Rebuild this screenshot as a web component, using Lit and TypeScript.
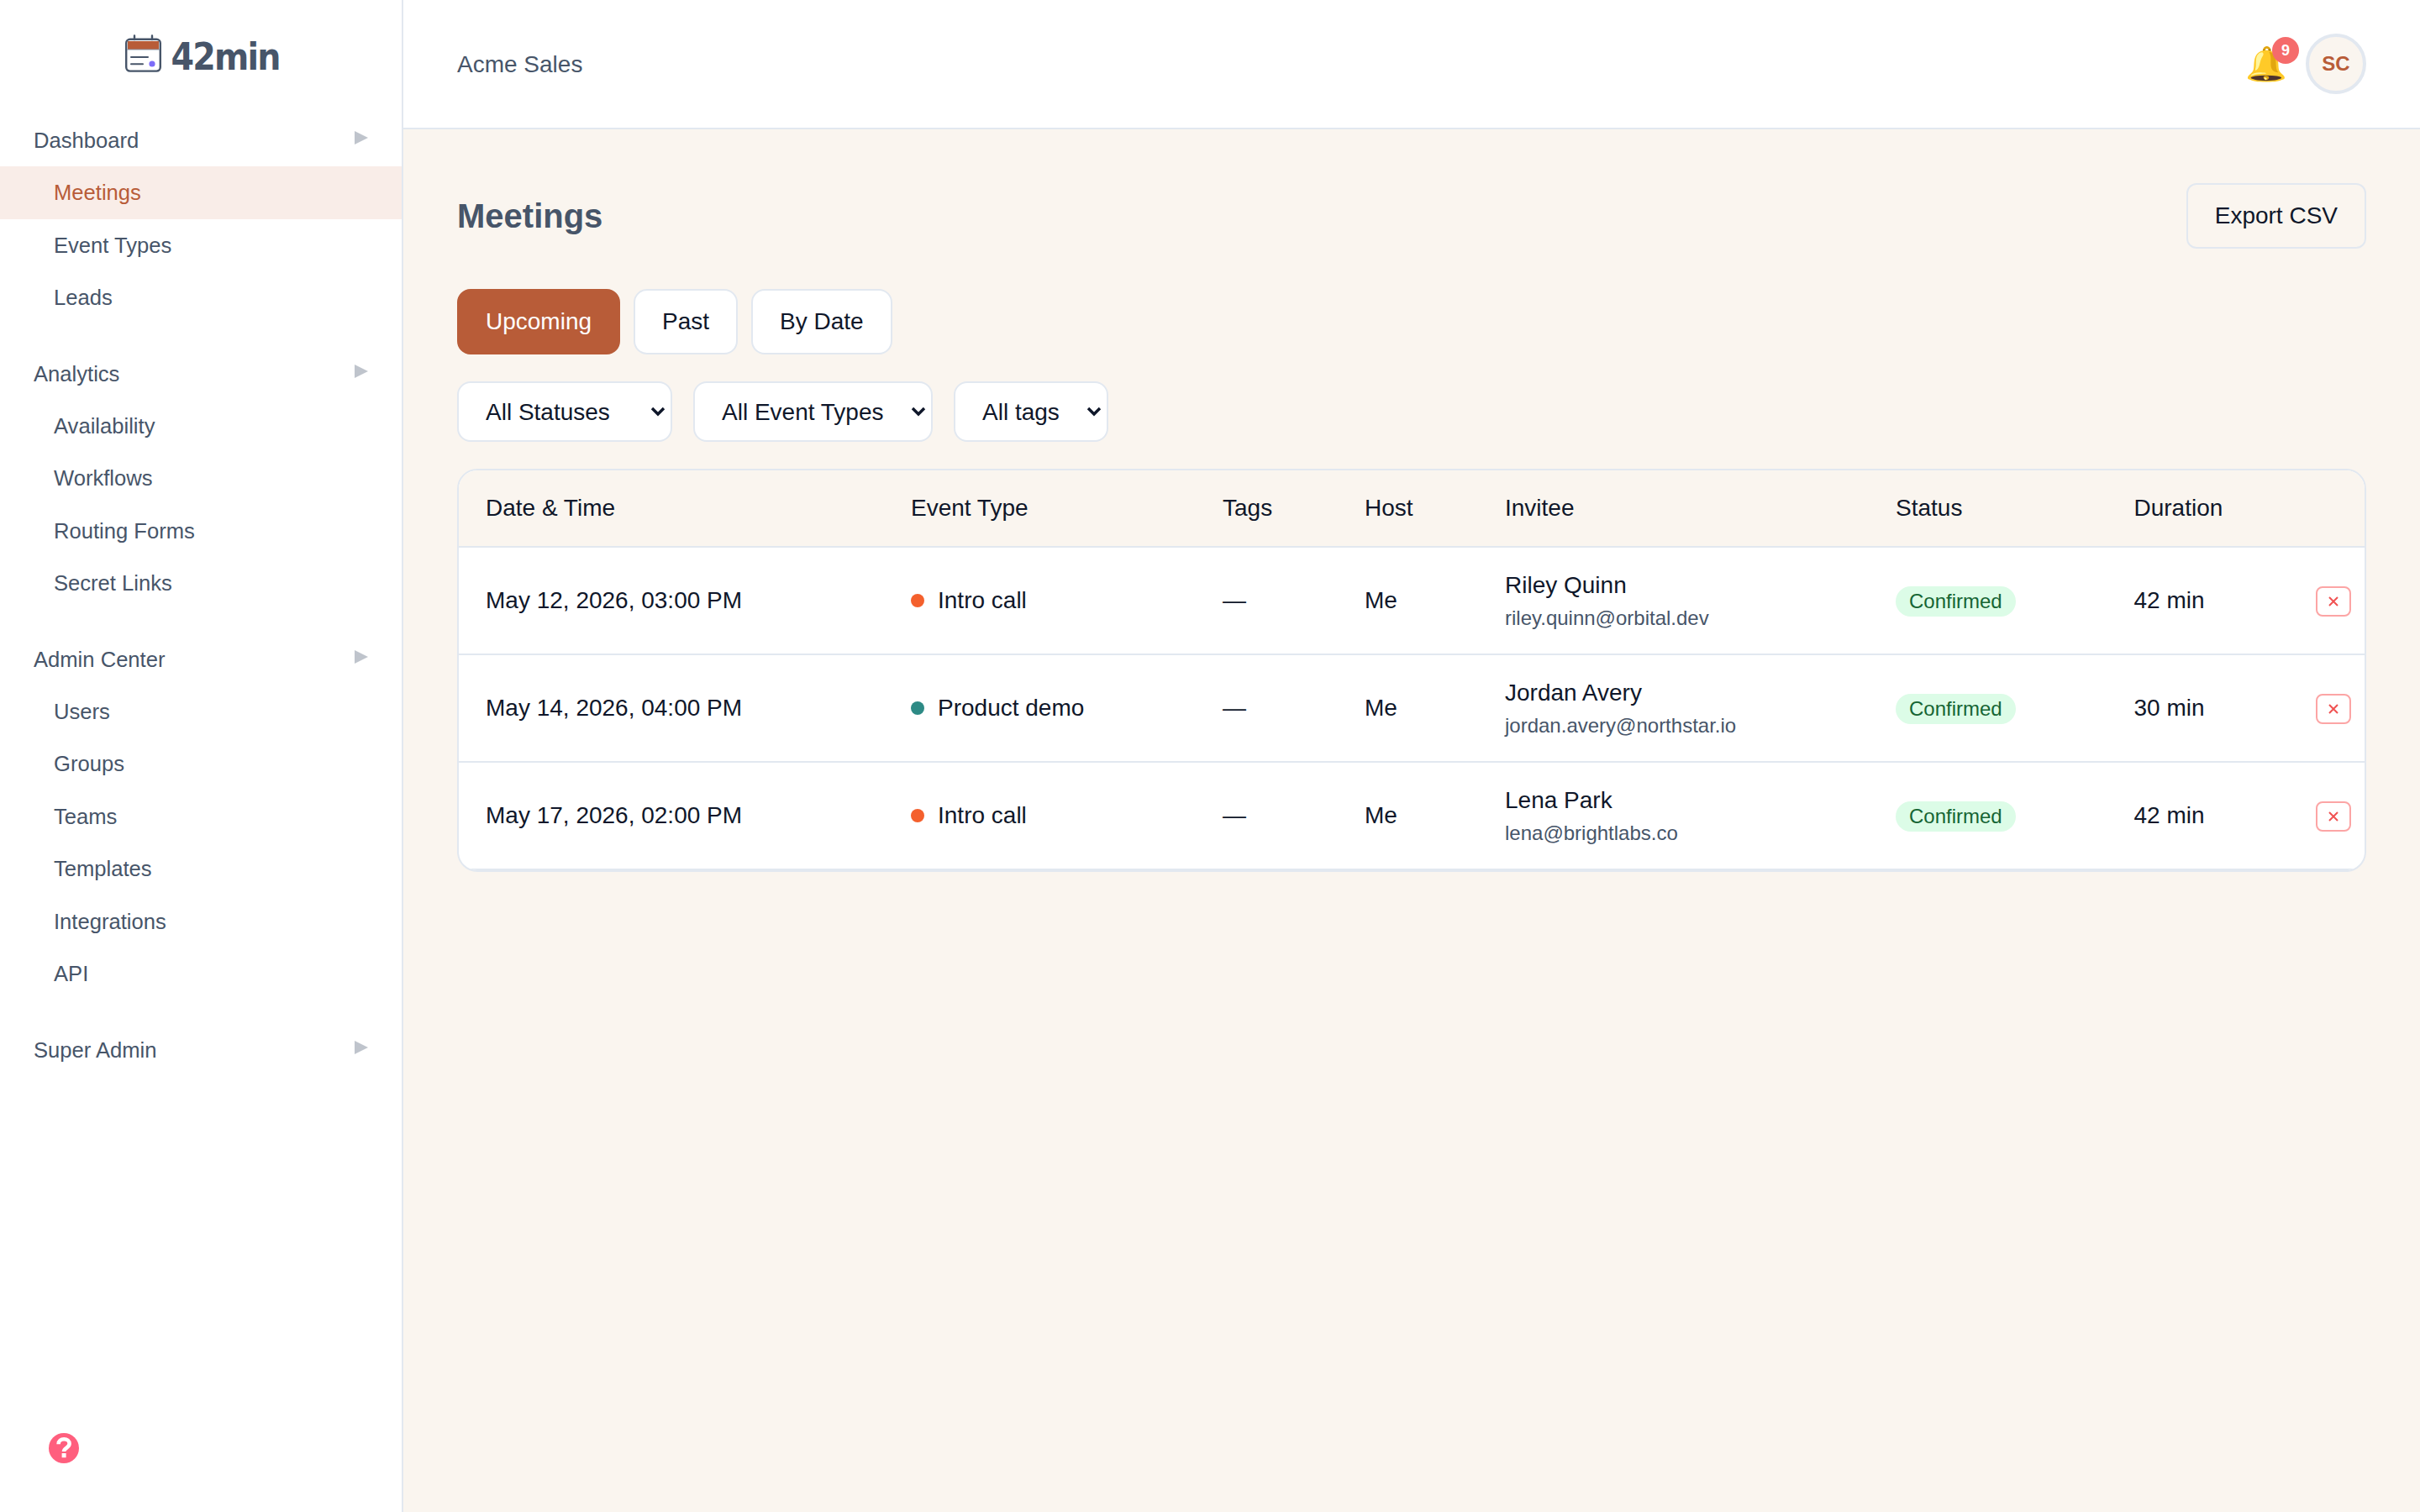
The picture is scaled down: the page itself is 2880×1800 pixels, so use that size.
import { LitElement, html, css } from "lit";
import { customElement } from "lit/decorators.js";

interface NavGroup {
  label: string;
  items: string[];
}

interface Meeting {
  when: string;
  type: string;
  dot: string;
  name: string;
  email: string;
  duration: string;
}

const NAV: NavGroup[] = [
  { label: "Dashboard", items: ["Meetings", "Event Types", "Leads"] },
  { label: "Analytics", items: ["Availability", "Workflows", "Routing Forms", "Secret Links"] },
  { label: "Admin Center", items: ["Users", "Groups", "Teams", "Templates", "Integrations", "API"] },
  { label: "Super Admin", items: [] },
];

const MEETINGS: Meeting[] = [
  { when: "May 12, 2026, 03:00 PM", type: "Intro call", dot: "#f4602d", name: "Riley Quinn", email: "riley.quinn@orbital.dev", duration: "42 min" },
  { when: "May 14, 2026, 04:00 PM", type: "Product demo", dot: "#2d8a85", name: "Jordan Avery", email: "jordan.avery@northstar.io", duration: "30 min" },
  { when: "May 17, 2026, 02:00 PM", type: "Intro call", dot: "#f4602d", name: "Lena Park", email: "lena@brightlabs.co", duration: "42 min" },
];

const COLUMNS = ["Date & Time", "Event Type", "Tags", "Host", "Invitee", "Status", "Duration", ""];

// first option is the one shown; the select sizes itself to the longest
const FILTERS = [
  ["All Statuses", "Confirmed", "Rescheduled", "Cancelled"],
  ["All Event Types", "Intro call", "Product demo"],
  ["All tags"],
];

@customElement("app-root")
export class AppRoot extends LitElement {
  // the reference is a 1440x900 layout shot at 2x, so zoom keeps the css values readable
  static styles = css`
    :host {
      display: block;
      zoom: 2;
      width: 1440px;
      height: 900px;
      font-family: "Liberation Sans", Arial, sans-serif;
      color: #0f172a;
    }
    .app {
      display: flex;
      height: 900px;
      background: #faf5ef;
    }
    .sidebar {
      width: 240px;
      flex: none;
      box-sizing: border-box;
      display: flex;
      flex-direction: column;
      background: #fff;
      border-right: 1px solid #e2e8f0;
      padding-bottom: 28px;
    }
    .logo {
      display: flex;
      align-items: center;
      justify-content: center;
      gap: 5px;
      padding: 20px 0 24px;
      height: 24px;
    }
    .logo svg {
      display: block;
    }
    .logo-text {
      font-family: "DejaVu Sans", sans-serif;
      font-stretch: condensed;
      font-size: 22px;
      font-weight: 700;
      letter-spacing: -0.9px;
      color: #475569;
      position: relative;
      top: 1.5px;
    }
    .group {
      margin-bottom: 14px;
    }
    .group-head,
    .item {
      font-size: 12.8px;
      line-height: 19.2px;
      padding: 6px 20px;
      color: #475569;
    }
    .group-head {
      display: flex;
      align-items: center;
      justify-content: space-between;
    }
    .group-head svg {
      display: block;
      margin-top: -3px;
    }
    .item {
      padding-left: 32px;
      padding-right: 12px;
    }
    .item.active {
      background: #f9ede8;
      color: #b85c38;
    }
    .help {
      margin-top: auto;
      margin-left: 28px;
      width: 20px;
      height: 20px;
    }
    .main {
      flex: 1;
      min-width: 0;
      display: flex;
      flex-direction: column;
    }
    .topbar {
      height: 76px;
      flex: none;
      display: flex;
      align-items: center;
      justify-content: space-between;
      padding: 0 32px;
      background: #fff;
      border-bottom: 1px solid #e2e8f0;
    }
    .org {
      font-size: 14px;
      line-height: 21px;
      padding-top: 1px;
      color: #475569;
    }
    .top-actions {
      display: flex;
      align-items: center;
      gap: 4px;
    }
    .bell {
      position: relative;
      font-size: 20px;
      line-height: 24px;
      width: 32px;
      text-align: left;
    }
    .bell-badge {
      position: absolute;
      top: -4px;
      right: 0;
      width: 16px;
      height: 16px;
      border-radius: 50%;
      background: #f56b6b;
      color: #fff;
      font-size: 9px;
      font-weight: 700;
      line-height: 16px;
      text-align: center;
    }
    .avatar {
      width: 36px;
      height: 36px;
      box-sizing: border-box;
      border-radius: 50%;
      border: 2px solid #e2e8f0;
      background: #faf5ef;
      color: #b85c38;
      font-size: 12px;
      font-weight: 700;
      display: flex;
      align-items: center;
      justify-content: center;
    }
    .content {
      padding: 32px;
    }
    .page-head {
      display: flex;
      align-items: center;
      justify-content: space-between;
      margin-bottom: 24px;
    }
    h1 {
      margin: 0;
      font-size: 20px;
      font-weight: 700;
      color: #475569;
    }
    .btn {
      font: inherit;
      font-size: 14px;
      line-height: 21px;
      padding: 8px 16px;
      border: 1px solid #e2e8f0;
      border-radius: 8px;
      background: #fff;
      color: #0f172a;
    }
    .btn.export {
      background: #faf5ef;
      border-radius: 6px;
    }
    .btn.on {
      background: #b85c38;
      border-color: #b85c38;
      color: #fff;
    }
    .tabs {
      display: flex;
      gap: 8px;
      margin-bottom: 16px;
    }
    .filters {
      display: flex;
      gap: 12.5px;
      margin-bottom: 16px;
    }
    .select-wrap {
      position: relative;
    }
    .select-wrap svg {
      position: absolute;
      right: 4px;
      top: 15px;
      pointer-events: none;
    }
    select {
      display: block;
      appearance: none;
      font: inherit;
      font-size: 14px;
      padding: 0 28px 0 16px;
      height: 36px;
      border: 1px solid #e2e8f0;
      border-radius: 8px;
      background: #fff;
      color: #0f172a;
    }
    .card {
      border: 1px solid #e2e8f0;
      border-radius: 12px;
      overflow: hidden;
      background: #fff;
    }
    table {
      width: 100%;
      table-layout: fixed;
      border-collapse: separate;
      border-spacing: 0;
      font-size: 14px;
    }
    th,
    td {
      box-sizing: border-box;
      text-align: left;
      padding: 0 0 0 16px;
      font-weight: 400;
    }
    th {
      height: 46px;
      background: #faf5ef;
      border-bottom: 1px solid #e2e8f0;
    }
    td {
      height: 64px;
      border-bottom: 1px solid #e2e8f0;
    }
    th:nth-child(1) { width: 253px; }
    th:nth-child(2) { width: 185.5px; }
    th:nth-child(3) { width: 84.5px; }
    th:nth-child(4) { width: 83.5px; }
    th:nth-child(5) { width: 232.5px; }
    th:nth-child(6) { width: 141.75px; }
    th:nth-child(7) { width: 118px; }
    .type {
      display: flex;
      align-items: center;
      gap: 8px;
    }
    .dot {
      width: 8px;
      height: 8px;
      border-radius: 50%;
    }
    .invitee-name {
      line-height: 21px;
    }
    .invitee-email {
      font-size: 12px;
      line-height: 18px;
      color: #475569;
    }
    .badge {
      display: inline-block;
      margin-top: 1px;
      padding: 2px 8px;
      border-radius: 9px;
      background: #dcfce7;
      color: #166534;
      font-size: 12px;
      vertical-align: middle;
    }
    td.act {
      padding: 0 8px 0 0;
      text-align: right;
    }
    .remove {
      display: inline-flex;
      align-items: center;
      justify-content: center;
      box-sizing: border-box;
      width: 21px;
      height: 18px;
      margin-top: 1px;
      padding: 0;
      border: 1px solid #fca5a5;
      border-radius: 4px;
      background: #fff;
      vertical-align: middle;
    }
  `;

  private renderGroup(group: NavGroup) {
    return html`
      <div class="group">
        <div class="group-head">
          <span>${group.label}</span>
          <svg width="8" height="8" viewBox="0 0 8 8"><polygon points="0,0 8,4 0,8" fill="#bfc4cc" /></svg>
        </div>
        ${group.items.map(
          (item) => html`<div class="item ${item === "Meetings" ? "active" : ""}">${item}</div>`
        )}
      </div>
    `;
  }

  private renderSidebar() {
    return html`
      <aside class="sidebar">
        <div class="logo">
          <svg width="24" height="24" viewBox="0 0 48 48">
            <path d="M15 2.5V7M36 2.5V7" stroke="#475569" stroke-width="2.4" stroke-linecap="round" />
            <path d="M7 9h37v10H7z" fill="#b85c38" />
            <rect x="5.2" y="6.8" width="40.6" height="37.8" rx="4.5" fill="none" stroke="#475569" stroke-width="2.4" />
            <path d="M6 19h39" stroke="#8a96a6" stroke-width="1" />
            <path d="M11 28h20M11 36.3h14" stroke="#475569" stroke-width="2" stroke-linecap="round" />
            <circle cx="36" cy="36" r="3.6" fill="#7c6cf8" />
          </svg>
          <span class="logo-text">42min</span>
        </div>
        ${NAV.map((g) => this.renderGroup(g))}
        <svg class="help" viewBox="0 0 20 20">
          <circle cx="10" cy="10" r="9" fill="#ff5f7e" />
          <path d="M6.8 7.6c0-2 1.5-3 3.3-3s3.2 1.1 3.2 2.8c0 2.3-3.3 2.4-3.3 4.6" fill="none" stroke="#fff" stroke-width="2.3" />
          <rect x="8.8" y="13" width="2.5" height="2.6" fill="#fff" />
        </svg>
      </aside>
    `;
  }

  private renderFilter(options: string[]) {
    return html`
      <div class="select-wrap">
        <select>${options.map((o) => html`<option>${o}</option>`)}</select>
        <svg width="9" height="6" viewBox="0 0 9 6"><path d="M1 1l3.5 3.5L8 1" fill="none" stroke="#0f172a" stroke-width="1.7" /></svg>
      </div>
    `;
  }

  private renderRow(m: Meeting) {
    return html`
      <tr>
        <td>${m.when}</td>
        <td>
          <div class="type"><span class="dot" style="background:${m.dot}"></span>${m.type}</div>
        </td>
        <td>—</td>
        <td>Me</td>
        <td>
          <div class="invitee-name">${m.name}</div>
          <div class="invitee-email">${m.email}</div>
        </td>
        <td><span class="badge">Confirmed</span></td>
        <td>${m.duration}</td>
        <td class="act">
          <button class="remove" aria-label="Cancel">
            <svg width="7" height="7" viewBox="0 0 14 14"><path d="M2 2l10 10M12 2L2 12" stroke="#f05252" stroke-width="2" /></svg>
          </button>
        </td>
      </tr>
    `;
  }

  render() {
    return html`
      <div class="app">
        ${this.renderSidebar()}
        <div class="main">
          <header class="topbar">
            <span class="org">Acme Sales</span>
            <div class="top-actions">
              <div class="bell">🔔<span class="bell-badge">9</span></div>
              <div class="avatar">SC</div>
            </div>
          </header>
          <main class="content">
            <div class="page-head">
              <h1>Meetings</h1>
              <button class="btn export">Export CSV</button>
            </div>
            <div class="tabs">
              <button class="btn on">Upcoming</button>
              <button class="btn">Past</button>
              <button class="btn">By Date</button>
            </div>
            <div class="filters">${FILTERS.map((f) => this.renderFilter(f))}</div>
            <div class="card">
              <table>
                <thead>
                  <tr>${COLUMNS.map((c) => html`<th>${c}</th>`)}</tr>
                </thead>
                <tbody>${MEETINGS.map((m) => this.renderRow(m))}</tbody>
              </table>
            </div>
          </main>
        </div>
      </div>
    `;
  }
}
